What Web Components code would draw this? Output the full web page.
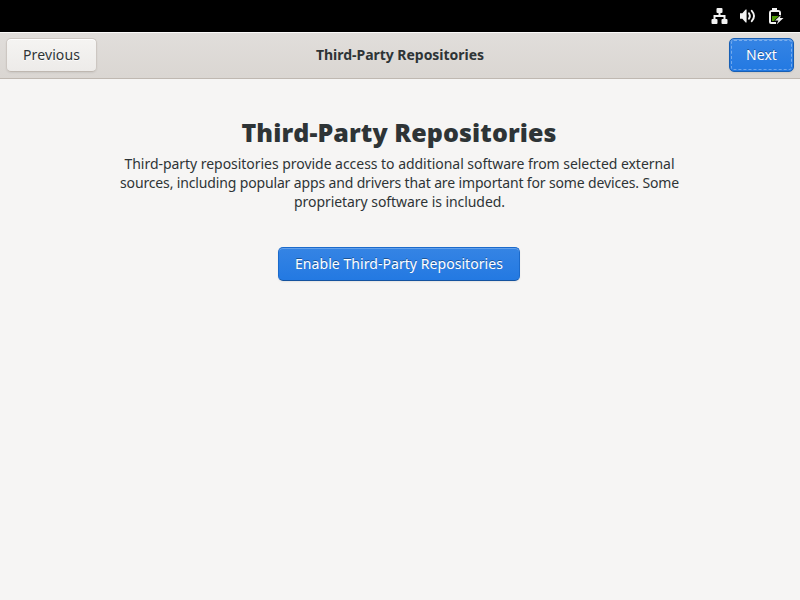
<!DOCTYPE html>
<html lang="en">
<head>
<meta charset="utf-8">
<title>Third-Party Repositories</title>
<style>
html,body{margin:0;height:100%;overflow:hidden;background:#f6f5f4}
body{font-family:"Noto Sans","Open Sans",sans-serif;font-size:14px;color:#2e3436}
</style>
</head>
<body>
<setup-window></setup-window>
<script>
// A single line of text tracked out to an exact measure.
class TextLine extends HTMLElement {
  connectedCallback() {
    const root = this.attachShadow({mode: 'open'});
    root.innerHTML = `<style>:host{display:block;white-space:nowrap}span{display:inline-block}</style><span><slot></slot></span>`;
    const span = root.querySelector('span');
    const target = Number(this.getAttribute('measure'));
    const count = this.textContent.length;
    const spacing = (target - span.getBoundingClientRect().width) / count;
    span.style.letterSpacing = spacing.toFixed(4) + 'px';
  }
}
class StatusBar extends HTMLElement {
  constructor() {
    super();
    this.attachShadow({mode: 'open'}).innerHTML = `<style>
:host{display:flex;height:32px;box-sizing:border-box;background:#000;justify-content:flex-end;align-items:center;gap:12px;padding:0 16px 0 0}
svg{display:block;width:16px;height:16px}
svg:nth-child(2){width:17px}
</style>
<svg viewBox="0 0 16 16" fill="#f2f2f2"><rect x="5" y="0" width="6" height="5" rx="1"/><path d="M7 5h2v2h5v4h-2V9H4v2H2V7h5z"/><rect x="0" y="11" width="6" height="5" rx="1"/><rect x="10" y="11" width="6" height="5" rx="1"/></svg>
<svg viewBox="0 0 17 16"><path d="M0 5h2.500L6 1h1v14H6l-3.500-4H0z" fill="#f2f2f2"/><path d="M9.500 5Q11.500 8 9.500 11" fill="none" stroke="#f2f2f2" stroke-width="2" stroke-linecap="round"/><path d="M12.500 2.500Q17.300 8 12.500 13.500" fill="none" stroke="#f2f2f2" stroke-width="2" stroke-linecap="round"/></svg>
<svg viewBox="0 0 16 16"><path d="M4 0h5v2h1q3 0 3 3v2h-2V4H3v10h5v2H3q-2 0-2-2V5q0-3 3-3z" fill="#f2f2f2"/><path d="M4 8h7l-4.500 4v1H4z" fill="#4e9a06"/><path d="M13 7L7 12.500h3.500L8.500 16.500l7-6.500H12z" fill="#f2f2f2"/></svg>`;
  }
}
class PushButton extends HTMLElement {
  constructor() {
    super();
    this.attachShadow({mode: 'open'}).innerHTML = `<style>
:host{display:flex;box-sizing:border-box;height:34px;align-items:center;padding:0 16px 2px;border:1px solid #cdc7c2;border-bottom-color:#bfb8b1;border-radius:5px;background:linear-gradient(#f5f4f2,#edebe9);box-shadow:inset 0 1px #fff,0 1px 2px rgba(0,0,0,.07);text-shadow:0 1px rgba(255,255,255,.77)}
:host([suggested]){color:#fff;border-color:#1b6acb;border-bottom-color:#15539e;background:linear-gradient(#3584e4,#2379e2);box-shadow:inset 0 1px rgba(255,255,255,.24),0 1px 2px rgba(0,0,0,.07);text-shadow:0 -1px rgba(0,0,0,.35)}
:host([focused]){border-color:#185fb4;outline:1px dashed rgba(255,255,255,.34);outline-offset:-3px}
</style><slot></slot>`;
  }
}
class HeaderBar extends HTMLElement {
  constructor() {
    super();
    this.attachShadow({mode: 'open'}).innerHTML = `<style>
:host{display:grid;grid-template-columns:1fr auto 1fr;box-sizing:border-box;height:47px;align-items:center;padding:0 6px;border-bottom:1px solid #bfb8b1;background:linear-gradient(#e1dedb,#dad6d2);box-shadow:inset 0 1px #faf9f8}
.start{justify-self:start}.end{justify-self:end}.title{font-weight:700;padding-bottom:2px}
</style><div class="start"><slot name="start"></slot></div><div class="title"><slot></slot></div><div class="end"><slot name="end"></slot></div>`;
  }
}
class SetupPage extends HTMLElement {
  constructor() {
    super();
    this.attachShadow({mode: 'open'}).innerHTML = `<style>
:host{display:flex;flex-direction:column;align-items:center;padding:35px 2px 0 0}
h1{margin:0;font-family:"Open Sans","Noto Sans",sans-serif;font-size:25px;line-height:36px;font-weight:800}
.copy{margin:4px 0 36px;display:flex;flex-direction:column;align-items:center;line-height:19px;padding-left:1px}
</style>
<h1><text-line measure="315">Third-Party Repositories</text-line></h1>
<div class="copy"><text-line measure="550">Third-party repositories provide access to additional software from selected external</text-line>
<text-line measure="559">sources, including popular apps and drivers that are important for some devices. Some</text-line>
<text-line measure="211">proprietary software is included.</text-line></div>
<push-button suggested><text-line measure="208">Enable Third-Party Repositories</text-line></push-button>`;
  }
}
class SetupWindow extends HTMLElement {
  constructor() {
    super();
    this.attachShadow({mode: 'open'}).innerHTML = `<style>:host{display:flex;flex-direction:column;height:100vh}</style>
<status-bar></status-bar>
<header-bar><push-button slot="start"><text-line measure="57">Previous</text-line></push-button><text-line measure="168">Third-Party Repositories</text-line><push-button slot="end" suggested focused><text-line measure="31">Next</text-line></push-button></header-bar>
<setup-page></setup-page>`;
  }
}
customElements.define('text-line', TextLine);
customElements.define('status-bar', StatusBar);
customElements.define('push-button', PushButton);
customElements.define('header-bar', HeaderBar);
customElements.define('setup-page', SetupPage);
customElements.define('setup-window', SetupWindow);
</script>
</body>
</html>
